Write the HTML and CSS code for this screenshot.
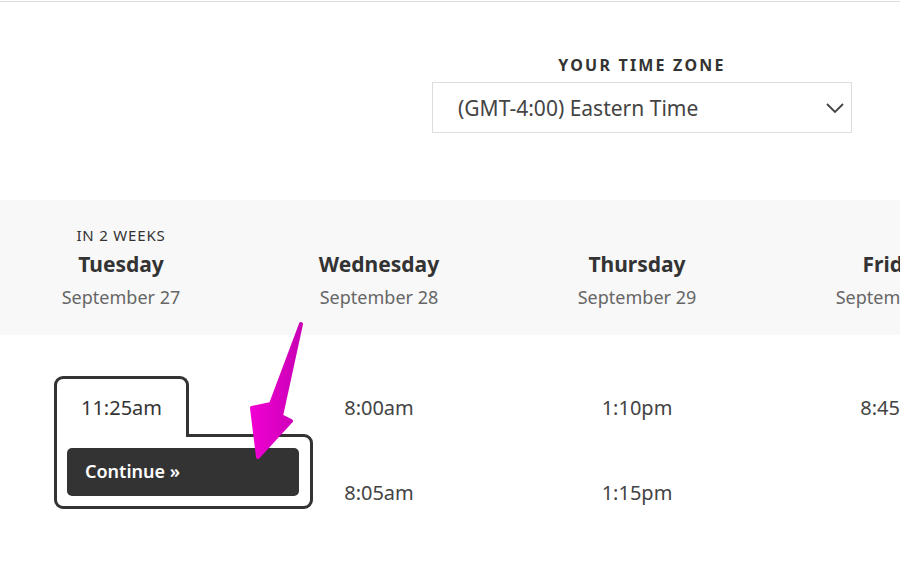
FILE: index.html
```html
<!DOCTYPE html>
<html lang="en">
<head>
  <meta charset="UTF-8">
  <meta name="viewport" content="width=device-width, initial-scale=1.0">
  <title>Pick a time</title>
  <link rel="stylesheet" href="styles.css">
</head>
<body>
  <div class="topbar"></div>

  <div class="zone-row">
    <div class="zone">
      <div class="zone-label">YOUR TIME ZONE</div>
      <div class="zone-select">
        <span>(GMT-4:00) Eastern Time</span>
        <svg class="chevron" width="18" height="10" viewBox="0 0 18 10">
          <path d="M1 1 L9 9 L17 1" fill="none" stroke="#444" stroke-width="1.8"/>
        </svg>
      </div>
    </div>
  </div>

  <div class="days">
    <div class="day">
      <div class="soon">IN 2 WEEKS</div>
      <div class="day-name">Tuesday</div>
      <div class="day-date">September 27</div>
    </div>
    <div class="day">
      <div class="soon"></div>
      <div class="day-name">Wednesday</div>
      <div class="day-date">September 28</div>
    </div>
    <div class="day">
      <div class="soon"></div>
      <div class="day-name">Thursday</div>
      <div class="day-date">September 29</div>
    </div>
    <div class="day">
      <div class="soon"></div>
      <div class="day-name">Friday</div>
      <div class="day-date">September 30</div>
    </div>
  </div>

  <div class="slots">
    <div class="slot-col">
      <div class="picked">
        <div class="picked-tab">11:25am</div>
        <div class="picked-body">
          <button class="continue">Continue &raquo;</button>
        </div>
      </div>
    </div>
    <div class="slot-col">
      <div class="time">8:00am</div>
      <div class="time">8:05am</div>
    </div>
    <div class="slot-col">
      <div class="time">1:10pm</div>
      <div class="time">1:15pm</div>
    </div>
    <div class="slot-col">
      <div class="time">8:45am</div>
    </div>
  </div>

  <!-- pointer added on top of the screenshot -->
  <svg class="pointer" width="70" height="150" viewBox="240 315 70 150">
    <defs>
      <linearGradient id="pink" x1="0" y1="0" x2="1" y2="0">
        <stop offset="0" stop-color="#f000d2"/>
        <stop offset="1" stop-color="#c800b4"/>
      </linearGradient>
    </defs>
    <path d="M301 324 L281 416 L291 421 L258 457 L252 408 L271 404 Z"
          fill="url(#pink)" stroke="url(#pink)" stroke-width="4" stroke-linejoin="round"/>
  </svg>
</body>
</html>
```

FILE: styles.css
```css
body {
  margin: 0;
  background: #fff;
  font-family: 'Noto Sans', 'Open Sans', sans-serif;
  color: #333;
  position: relative;
  overflow: hidden;
}
.topbar {
  height: 1px;
  border-bottom: 1px solid #ddd;
}
.zone-row {
  display: flex;
  justify-content: flex-end;
  padding: 51px 48px 0 0;
}
.zone {
  width: 420px;
  text-align: center;
}
.zone-label {
  font-size: 16px;
  font-weight: 700;
  letter-spacing: 2.2px;
  color: #333;
  line-height: 24px;
  margin-bottom: 5px;
}
.zone-select {
  display: flex;
  align-items: center;
  justify-content: space-between;
  height: 49px;
  border: 1px solid #ddd;
  padding: 0 7px 0 25px;
  font-size: 21px;
  color: #444;
  text-align: left;
}
.days {
  margin-top: 67px;
  height: 135px;
  background: #f8f8f8;
  display: grid;
  grid-template-columns: repeat(4, 242px);
  column-gap: 16px;
  padding-top: 25px;
  box-sizing: border-box;
  text-align: center;
  white-space: nowrap;
}
.soon {
  height: 20px;
  font-size: 15px;
  letter-spacing: 0.8px;
  color: #333;
  line-height: 20px;
}
.day-name {
  font-size: 21px;
  font-weight: 700;
  color: #333;
  line-height: 30px;
  margin-top: 4px;
}
.day-date {
  font-size: 18px;
  color: #666;
  line-height: 30px;
  margin-top: 3px;
}
.slots {
  display: grid;
  grid-template-columns: repeat(4, 242px);
  column-gap: 16px;
  padding-top: 30px;
  white-space: nowrap;
}
.slot-col {
  display: flex;
  flex-direction: column;
  align-items: center;
}
.time {
  height: 85px;
  line-height: 86px;
  font-size: 20px;
  color: #444;
}
.picked {
  align-self: flex-start;
  margin: 11px 0 0 54px;
}
.picked-tab {
  position: relative;
  z-index: 1;
  width: 135px;
  height: 61px;
  border: 3px solid #333;
  border-bottom: 0;
  border-radius: 9px 9px 0 0;
  background: #fff;
  box-sizing: border-box;
  text-align: center;
  line-height: 58px;
  font-size: 20px;
  color: #333;
}
.picked-body {
  width: 259px;
  margin-top: -3px;
  border: 3px solid #333;
  border-radius: 0 9px 9px 9px;
  padding: 11px 11px 10px 10px;
  box-sizing: border-box;
}
.continue {
  display: block;
  width: 232px;
  height: 48px;
  border: none;
  border-radius: 5px;
  background: #333;
  color: #fff;
  font-family: inherit;
  font-size: 18px;
  font-weight: 600;
  text-align: left;
  padding: 0 18px 2px;
  cursor: pointer;
}
.pointer {
  position: absolute;
  left: 240px;
  top: 315px;
}
```
